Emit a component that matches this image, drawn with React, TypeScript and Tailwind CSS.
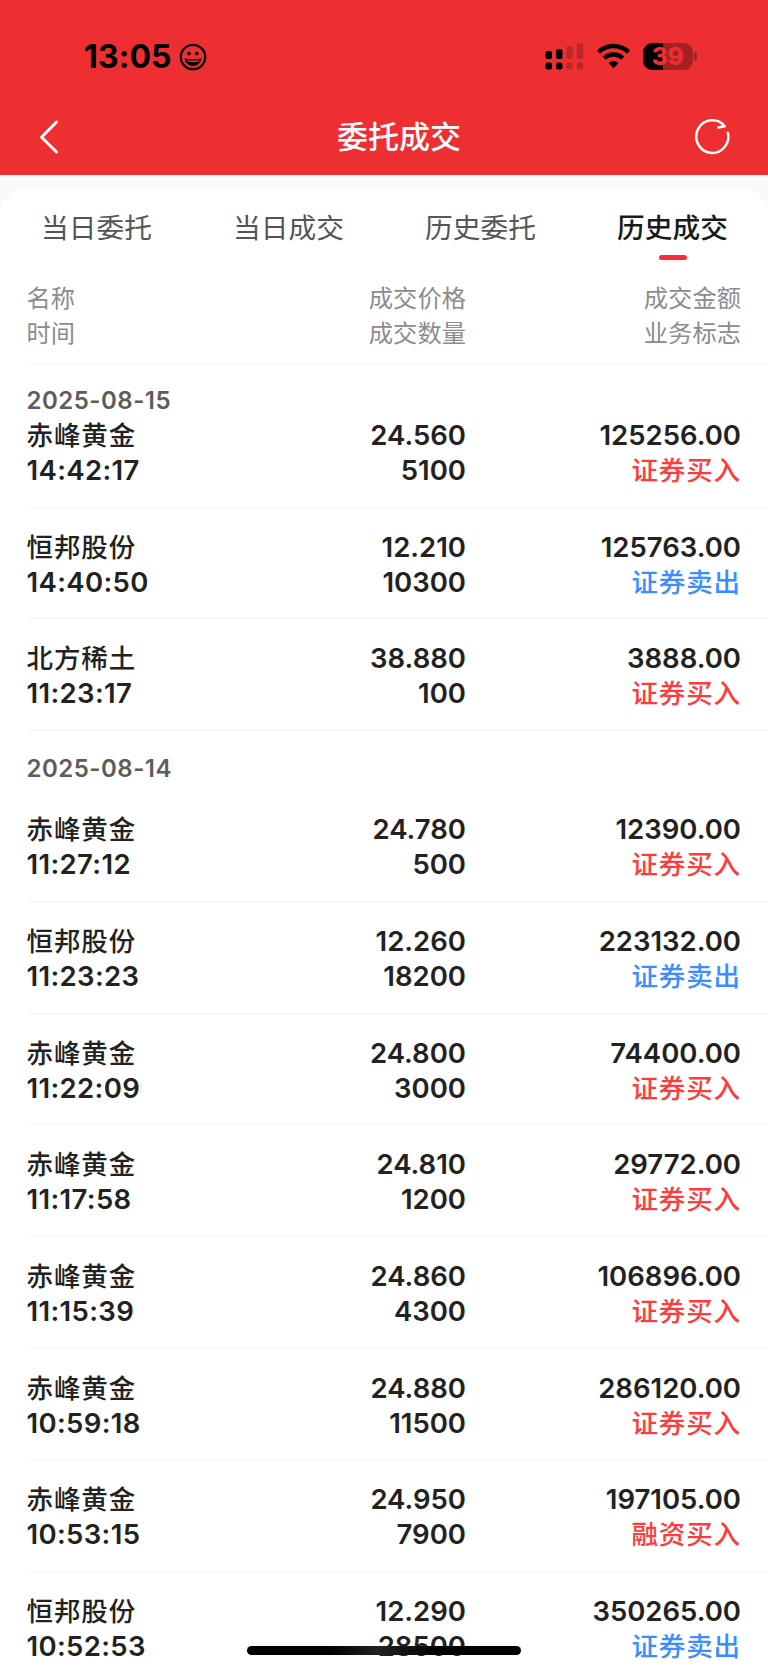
import React from "react";

type Trade = {
  name: string;
  time: string;
  price: string;
  qty: string;
  amount: string;
  flag: string;
};

const t = (name: string, time: string, price: string, qty: string, amount: string, flag: string): Trade => ({
  name,
  time,
  price,
  qty,
  amount,
  flag,
});

const dayOne: Trade[] = [
  t("赤峰黄金", "14:42:17", "24.560", "5100", "125256.00", "证券买入"),
  t("恒邦股份", "14:40:50", "12.210", "10300", "125763.00", "证券卖出"),
  t("北方稀土", "11:23:17", "38.880", "100", "3888.00", "证券买入"),
];

const dayTwo: Trade[] = [
  t("赤峰黄金", "11:27:12", "24.780", "500", "12390.00", "证券买入"),
  t("恒邦股份", "11:23:23", "12.260", "18200", "223132.00", "证券卖出"),
  t("赤峰黄金", "11:22:09", "24.800", "3000", "74400.00", "证券买入"),
  t("赤峰黄金", "11:17:58", "24.810", "1200", "29772.00", "证券买入"),
  t("赤峰黄金", "11:15:39", "24.860", "4300", "106896.00", "证券买入"),
  t("赤峰黄金", "10:59:18", "24.880", "11500", "286120.00", "证券买入"),
  t("赤峰黄金", "10:53:15", "24.950", "7900", "197105.00", "融资买入"),
  t("恒邦股份", "10:52:53", "12.290", "28500", "350265.00", "证券卖出"),
];

function StatusBar() {
  return (
    <div className="flex h-[99px] items-start justify-between pt-[40px] pr-[71px] pl-[84px]">
      <div className="flex h-[34px] items-center">
        <span className="text-[32px] leading-8 font-bold tracking-[0.1px] text-black">13:05</span>
        <svg className="ml-[7px]" width="28" height="28" viewBox="0 0 28 28">
          <circle cx="14" cy="14" r="12.2" fill="none" stroke="#000" strokeWidth="2.2" />
          <circle cx="10" cy="10.6" r="1.8" />
          <circle cx="17.8" cy="10.6" r="1.8" />
          <path d="M5.6 15.2c5 1.4 11.8 1.4 16.8 0c-.6 4.8-4 7.6-8.4 7.6s-7.8-2.8-8.4-7.6z" />
          <path d="M7.8 16.9c4 .9 8.4 .9 12.4 0l-.8 1.7c-3.4 .8-7.4 .8-10.8 0z" fill="#ed2f32" />
        </svg>
      </div>
      <div className="flex h-8 items-center">
        <svg width="39" height="28" viewBox="0 0 39 28">
          <g fill="#000">
            <rect x="0.5" y="9" width="6.5" height="8" rx="2" />
            <rect x="0.5" y="20.5" width="6.5" height="7" rx="2" />
            <rect x="11" y="7" width="6.5" height="10" rx="2" />
            <rect x="11" y="20.5" width="6.5" height="7" rx="2" />
          </g>
          <g fill="#bf2629">
            <rect x="21.3" y="4" width="6.5" height="13" rx="2" />
            <rect x="21.3" y="20.5" width="6.5" height="7" rx="2" />
            <rect x="31.7" y="1" width="6.5" height="16" rx="2" />
            <rect x="31.7" y="20.5" width="6.5" height="7" rx="2" />
          </g>
        </svg>
        <svg className="ml-[12px]" width="35" height="26" viewBox="0 0 35 26">
          <g fill="none" stroke="#000" strokeWidth="4.5">
            <path d="M2.4 9.2a21.6 21.6 0 0 1 30.2 0" />
            <path d="M8.2 15.2a13.4 13.4 0 0 1 18.6 0" />
          </g>
          <path d="M17.5 25.2l-5-5.1a7.2 7.2 0 0 1 10 0z" />
        </svg>
        <div className="ml-[12px] flex h-[27px] w-[50px] items-center justify-center rounded-[9px] bg-[linear-gradient(to_right,#000_0_20px,#a51f23_20px)]">
          <span className="text-[24.5px] leading-[27px] font-extrabold tracking-[-0.5px] text-[#ed2f32]">39</span>
        </div>
        <div className="ml-[1.5px] h-[9px] w-[3px] rounded-r-full bg-[#a51f23]" />
      </div>
    </div>
  );
}

function NavBar() {
  return (
    <div className="grid h-[75px] grid-cols-[100px_1fr_100px] items-center">
      <svg className="ml-[38px]" width="22" height="36" viewBox="0 0 22 36">
        <path d="M18.5 3L3.500 18.2L18.5 33" fill="none" stroke="#fff" strokeWidth="3" strokeLinecap="round" strokeLinejoin="round" />
      </svg>
      <h1 className="pl-[30px] text-center text-[31px] leading-[40px] font-medium text-white">委托成交</h1>
      <svg className="ml-[27px]" width="38" height="38" viewBox="0 0 38 38">
        <path d="M32.8 14.7A16 16.3 0 1 1 29.6 8.2L23.2 9.500" fill="none" stroke="#fff" strokeWidth="2.5" strokeLinecap="round" strokeLinejoin="round" />
      </svg>
    </div>
  );
}

function Row({ trade, first = false, last = false }: { trade: Trade; first?: boolean; last?: boolean }) {
  return (
    <div
      className={`grid grid-cols-[1fr_180px_275px] pr-[27px] text-[27.5px] leading-[35px] font-semibold text-[#222] ${
        first ? "h-[90px]" : "h-[111.67px] pt-[22px]"
      } ${last ? "" : "border-b border-[#f3f3f5]"}`}
    >
      <div>
        <div className="text-[26.5px] font-medium tracking-[0.9px]">{trade.name}</div>
        <div className="tracking-[0.35px]">{trade.time}</div>
      </div>
      <div className="text-right">
        <div>{trade.price}</div>
        <div>{trade.qty}</div>
      </div>
      <div className="text-right">
        <div>{trade.amount}</div>
        <div className={`text-[26.5px] font-medium tracking-[0.9px] ${trade.flag.endsWith("卖出") ? "text-[#3c8dff]" : "text-[#ff3b3b]"}`}>
          {trade.flag}
        </div>
      </div>
    </div>
  );
}

const tabs = ["当日委托", "当日成交", "历史委托", "历史成交"];

export default function App() {
  return (
    <div className="relative h-[1669px] w-[768px] overflow-hidden bg-[#f9f9fc] font-['Inter','Noto_Sans_CJK_SC',sans-serif]">
      <header className="h-[175px] bg-[#ed2f32]">
        <StatusBar />
        <NavBar />
      </header>
      <main className="mt-[14px] rounded-t-[24px] bg-white">
        <nav className="grid h-[74px] grid-cols-4 pt-[19px]">
          {tabs.map((tab, i) => (
            <div
              key={tab}
              className={`flex flex-col items-center pl-px text-[27.7px] leading-[40px] ${
                i === 3 ? "font-medium text-[#1a1a1a]" : "text-[#555]"
              }`}
            >
              {tab}
              {i === 3 && <span className="mt-[6.5px] h-[5.5px] w-[28px] rounded-full bg-[#fc2c3b]" />}
            </div>
          ))}
        </nav>
        <section className="pl-[26.5px]">
          <div className="grid h-[101px] grid-cols-[1fr_180px_275px] border-b border-[#f3f3f5] pt-[18px] pr-[27px] text-[24.3px] leading-[35px] text-[#8c8c8c]">
            <div>
              <div>名称</div>
              <div>时间</div>
            </div>
            <div className="text-right">
              <div>成交价格</div>
              <div>成交数量</div>
            </div>
            <div className="text-right">
              <div>成交金额</div>
              <div>业务标志</div>
            </div>
          </div>
          <div className="h-[53.6px] pt-[19px] text-[24px] leading-[35px] font-semibold tracking-[0.5px] text-[#5c5c5c]">2025-08-15</div>
          {dayOne.map((d, i) => (
            <Row key={d.time} trade={d} first={i === 0} />
          ))}
          <div className="h-[59.4px] pt-[20px] text-[24px] leading-[35px] font-semibold tracking-[0.5px] text-[#5c5c5c]">2025-08-14</div>
          {dayTwo.map((d, i) => (
            <Row key={d.time} trade={d} last={i === dayTwo.length - 1} />
          ))}
        </section>
      </main>
      <div className="absolute top-[1645.5px] left-[247px] h-[9px] w-[274px] rounded-full bg-[linear-gradient(to_right,#000_30%,#222_48%,#000_70%)]" />
    </div>
  );
}
